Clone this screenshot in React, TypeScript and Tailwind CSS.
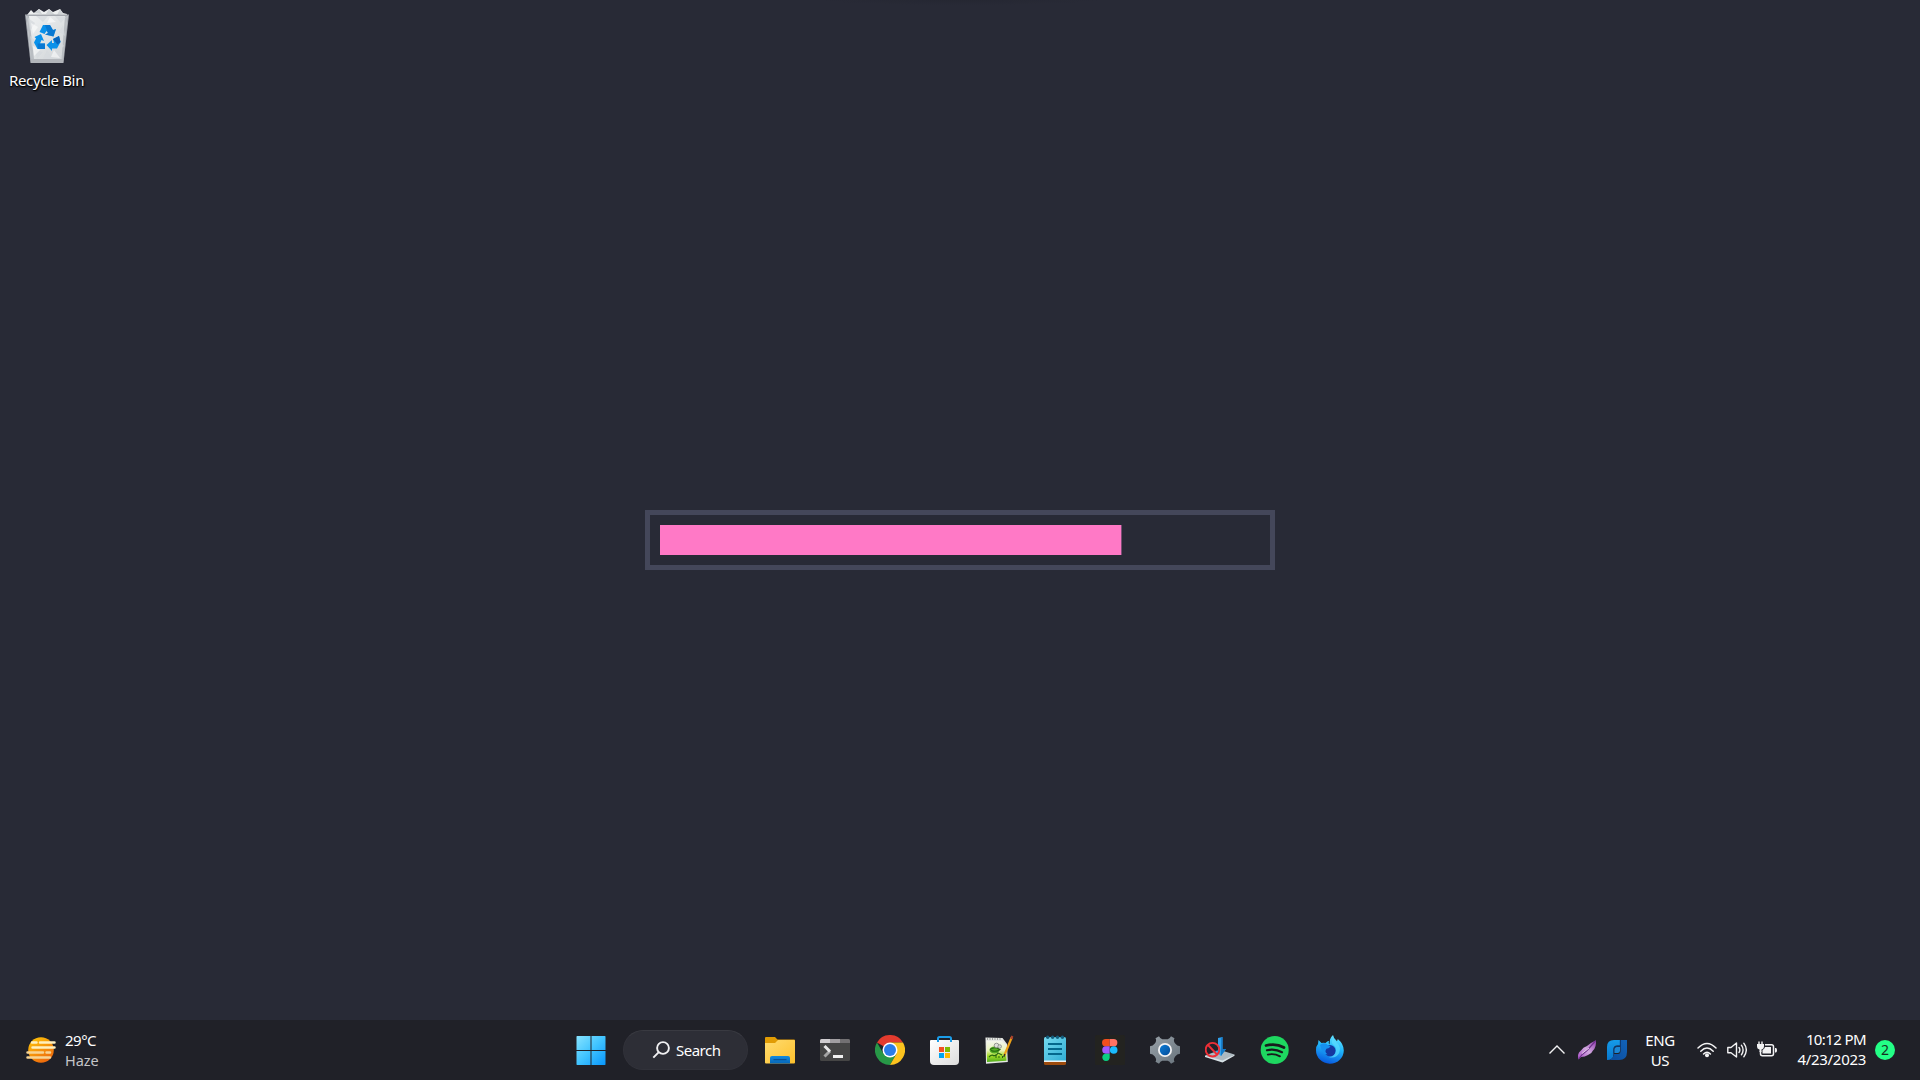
import React from 'react';

type IconProps = { children: React.ReactNode; className?: string; size?: number };

const Icon = ({ children, className = '', size = 30 }: IconProps) => (
  <svg viewBox={`0 0 ${size} ${size}`} width={size} height={size} fill="none" className={`block shrink-0 ${className}`}>
    {children}
  </svg>
);

const Cell = ({ children }: { children: React.ReactNode }) => (
  <button className="flex h-[60px] w-[55px] shrink-0 items-center justify-center">{children}</button>
);

const RecycleBin = () => (
  <svg viewBox="0 0 48 56" width="48" height="56" className="block" fill="none">
    <defs>
      <linearGradient id="bin" x1="0" y1="0" x2="1" y2="1">
        <stop offset="0" stopColor="#eff1f2" />
        <stop offset="1" stopColor="#d0d4d7" />
      </linearGradient>
    </defs>
    <path d="M4 7 8 2 11 5 16 1 21 4 26 1 30 4 37 1 40 5 44 6 43 12H5z" fill="#eceeef" />
    <path d="M11 5 16 1 19 6zM26 1 32 7 23 6zM37 1 40 6 34 7z" fill="#cfd3d6" />
    <path d="M2 6.5h44L40.500 55H7.500z" fill="#a5a9b0" />
    <path d="M3.500 8h41L40 51H8z" fill="url(#bin)" />
    <path d="M3.500 8H6L11 51H8zM44.500 8H42L38.500 51H40z" fill="#b9bdc2" />
    <path d="M5 10 12 15 7 23zM13 8 20 14 25 8zM32 8 38 15 43 9zM40 17 36 24 42 28zM7 28 14 34 9 40zM37 33 41 38 35 43zM12 42 20 44 14 51zM24 42 30 51 20 51zM32 43 39 46 35 51z" fill="#d6dadd" opacity=".75" />
    <path d="M8 15 15 19 10 26zM27 9 33 14 24 15zM10 38 17 42 11 48zM31 42 37 50 28 49z" fill="#fff" opacity=".55" />
    <path d="M7.500 51h33l-.5 4h-32z" fill="#b2b5ba" />
    <path d="M16.500 24 20 17h7l3 5 3-1-2.500 7.500L22 26.500l3-1.500-1.500-2L21.500 26z" fill="#0a91ea" />
    <path d="M22 17h5l3 5 3-1-2.500 7.500L22 26.500l3-1.500z" fill="#0765bd" opacity=".55" />
    <path d="M11.500 29 18 26l3 7-2.500-1-1.500 3.500h5V41h-7.500L11 34.500l2-4z" fill="#0a91ea" />
    <path d="M14.500 35.500H22V41h-7z" fill="#0878d3" />
    <path d="M30 31 36 28 37.500 34 34 40.500H29V43L23.500 37 29 32v3h2z" fill="#0a91ea" />
    <path d="M30 31 36 28 37.500 34 34.500 36.500z" fill="#0765bd" />
  </svg>
);

const Haze = () => (
  <Icon>
    <defs>
      <linearGradient id="sun" x1="0" y1="0" x2=".6" y2="1">
        <stop offset="0" stopColor="#ffca08" />
        <stop offset="1" stopColor="#ee6a0c" />
      </linearGradient>
    </defs>
    <circle cx="15" cy="15" r="12.800" fill="url(#sun)" />
    <g stroke="#fff0bd" strokeWidth="2.500" strokeLinecap="round">
      <path d="M6 7.500h4.500M14 7.500h14.500M6.500 12.500H28.500" />
      <path d="M1.500 17.500H17M20.500 17.500H24M1.500 22.500H24" stroke="#f7d493" />
    </g>
  </Icon>
);

const StartLogo = () => (
  <Icon className="mr-px">
    <defs>
      <linearGradient id="win" x1="0" y1="0" x2="30" y2="30" gradientUnits="userSpaceOnUse">
        <stop stopColor="#8be5ff" />
        <stop offset=".5" stopColor="#41c4ff" />
        <stop offset="1" stopColor="#0795fb" />
      </linearGradient>
    </defs>
    <path d="M1 1h13.500v14H.5V1.500zM15.500 1H29l.5.5V15h-14zM.5 16h14v14H1l-.5-.5zM15.500 16h14v13.500l-.5.5H15.500z" fill="url(#win)" />
  </Icon>
);

const Explorer = () => (
  <Icon>
    <defs>
      <linearGradient id="fold" x1="0" y1="0" x2="1" y2="1">
        <stop stopColor="#ffdc70" />
        <stop offset="1" stopColor="#fdc02c" />
      </linearGradient>
      <linearGradient id="foldb" x1="0" y1="0" x2="0" y2="1">
        <stop stopColor="#118ade" />
        <stop offset="1" stopColor="#0666b8" />
      </linearGradient>
    </defs>
    <path d="M0 3q0-1 1-1h9l2.500 2.500H29q1 0 1 1V12H0z" fill="#e19c04" />
    <path d="M0 8h10l3-3h16q1 0 1 1v21.500q0 1-1 1H1q-1 0-1-1z" fill="url(#fold)" />
    <path d="M5 28.500V23q0-2 2-2h16q2 0 2 2v5.500z" fill="url(#foldb)" />
    <path d="M8.500 24.700h13" stroke="#07488c" />
  </Icon>
);

const Terminal = () => (
  <Icon>
    <rect y="4" width="30" height="22" rx="1.500" fill="#454545" />
    <path d="M0 8V5.500Q0 4 1.500 4H10v4z" fill="#d0cdd0" />
    <path d="M10 4h10v4H10z" fill="#a19ea1" />
    <path d="M20 4h8.500Q30 4 30 5.500V8H20z" fill="#727072" />
    <path d="M4.500 21.500 10 16" stroke="#a5a5a5" strokeWidth="3" />
    <path d="M4.500 11 10 16.500" stroke="#e9e9e9" strokeWidth="3" />
    <path d="M13 20h10v3H13z" fill="#f0f0f0" />
  </Icon>
);

const Chrome = () => (
  <Icon>
    <path d="M15 15 2 7.500A15 15 0 0 1 28 7.500L15 7.500z" fill="#e33b2e" />
    <path d="M2 7.500A15 15 0 0 0 15 30l6.500-11.250L15 15 8.500 18.750z" fill="#279847" />
    <path d="M28 7.500A15 15 0 0 1 15 30l6.500-11.250L15 7.500z" fill="#fcc31e" />
    <circle cx="15" cy="15" r="7.500" fill="#fff" />
    <circle cx="15" cy="15" r="6" fill="#2b7de9" />
  </Icon>
);

const Store = () => (
  <Icon>
    <defs>
      <linearGradient id="bag" x1="0" y1="0" x2="1" y2="1">
        <stop stopColor="#fff" />
        <stop offset="1" stopColor="#dcdcdc" />
      </linearGradient>
    </defs>
    <path d="M0 6q0-1 1-1h27q1 0 1 1v20q0 4-4 4H4q-4 0-4-4z" fill="url(#bag)" />
    <path d="M8 7V3.500Q8 2 9.500 2h10Q21 2 21 3.500V7" stroke="#1b9de8" strokeWidth="2" />
    <path d="M9 12h5v5H9z" fill="#f25022" />
    <path d="M15 12h5v5h-5z" fill="#7fba00" />
    <path d="M9 18h5v5H9z" fill="#00a4ef" />
    <path d="M15 18h5v5h-5z" fill="#ffb900" />
  </Icon>
);

const NotepadPlus = () => (
  <Icon>
    <defs>
      <linearGradient id="npp" x1="0" y1="0" x2="0" y2="1">
        <stop stopColor="#f3f5ec" />
        <stop offset=".45" stopColor="#eaf4bb" />
        <stop offset=".7" stopColor="#a6dc29" />
        <stop offset="1" stopColor="#4fae1c" />
      </linearGradient>
    </defs>
    <path d="M.5 2.500 17.500 3 22 9l.8 18L1 28.700z" fill="#e6e8e4" />
    <path d="M1.500 6 17 6 21 10l.5 15.800L2 27z" fill="url(#npp)" />
    <path d="M2 4h15" stroke="#8b8d8a" strokeWidth="1.500" strokeDasharray="1 1.500" />
    <ellipse cx="9.500" cy="15" rx="5" ry="3.500" fill="#54ae23" />
    <path d="M5 14.500q5-3.500 10 0-4 3-9 1M7 20q4 2 6-2l4 2M4 22q3-3 5-1" stroke="#276811" strokeWidth="1.100" />
    <circle cx="11.500" cy="10.500" r="2.300" fill="#dedfd9" stroke="#80837f" strokeWidth=".8" />
    <circle cx="14.700" cy="11.500" r="1.800" fill="#d2d7cf" stroke="#80837f" strokeWidth=".7" />
    <path d="M11 23v-3.500M14 23v-2M17.500 23v-2" stroke="#26650f" />
    <path d="M26.700 2.500 19.500 20" stroke="#eda218" strokeWidth="2.200" />
    <path d="m27.300 1-1.100 3" stroke="#ab422d" strokeWidth="2.300" />
    <path d="m19.800 19-1 3" stroke="#33322f" strokeWidth="1.300" />
  </Icon>
);

const Notepad = () => (
  <Icon>
    <defs>
      <linearGradient id="note" x1="0" y1="0" x2="1" y2="1">
        <stop stopColor="#75daf0" />
        <stop offset="1" stopColor="#31aed4" />
      </linearGradient>
    </defs>
    <path d="M4 22h22v6.500q0 1.500-1.500 1.500h-19Q4 30 4 28.500z" fill="#9d4b0d" />
    <path d="M4 22h22v5H4z" fill="#edf2f3" />
    <path d="M4 3.500Q4 2 5.500 2h19Q26 2 26 3.500v22H4z" fill="url(#note)" />
    <g fill="#155f7e">
      <circle cx="7.700" cy="2.200" r="1.700" />
      <circle cx="12.600" cy="2.200" r="1.700" />
      <circle cx="17.500" cy="2.200" r="1.700" />
      <circle cx="22.400" cy="2.200" r="1.700" />
    </g>
    <path d="M8 9h14M8 14h14M8 19h14" stroke="#04688c" strokeWidth="1.800" />
  </Icon>
);

const Figma = () => (
  <Icon>
    <rect width="30" height="30" rx="1.500" fill="#23241f" fillOpacity=".9" />
    <path d="M14.700 4h-4a3.670 3.670 0 0 0 0 7.340h4z" fill="#f24e1e" />
    <path d="M14.700 4h4a3.670 3.670 0 0 1 0 7.340h-4z" fill="#ff7262" />
    <path d="M14.700 11.340h-4a3.670 3.670 0 0 0 0 7.330h4z" fill="#a259ff" />
    <circle cx="18.700" cy="15" r="3.800" fill="#1abcfe" />
    <path d="M14.700 18.670h-4a3.670 3.670 0 1 0 4 3.670z" fill="#0acf83" />
  </Icon>
);

const Settings = () => (
  <Icon>
    <defs>
      <linearGradient id="gear" x1="0" y1="0" x2="1" y2="1">
        <stop stopColor="#98a1a8" />
        <stop offset="1" stopColor="#68737c" />
      </linearGradient>
      <linearGradient id="hub" x1="0" y1="0" x2="1" y2="1">
        <stop stopColor="#0b7cd6" />
        <stop offset="1" stopColor="#064d99" />
      </linearGradient>
    </defs>
    <path d="M5.500 3.200 9 1.200q1.200 2.600 3.300 3h5.400q2.100-.4 3.300-3l3.500 2q-1.500 2.500.7 5.300Q27 11 30 11.200v7.600q-3 .2-4.800 2.700-2.200 2.800-.7 5.300l-3.500 2q-1.200-2.600-3.300-3h-5.400q-2.100.4-3.300 3l-3.500-2q1.500-2.500-.7-5.300Q3 19 0 18.800v-7.600q3-.2 4.800-2.700 2.200-2.800.7-5.300z" fill="url(#gear)" />
    <circle cx="15" cy="15" r="7" fill="#f2f2f3" />
    <circle cx="15" cy="15" r="5.200" fill="url(#hub)" />
  </Icon>
);

const Installer = () => (
  <Icon>
    <path d="M0 20.500 15 15l14.500 4.500L17.500 27z" fill="#adb9c0" />
    <path d="M0 20.500 17.500 25.500 29.500 19.500v1.200L17.500 27.500 0 22z" fill="#d8e2e7" />
    <path d="m13 3 4.500-1v12l3.500 0-5 7-6-5 3-.5z" fill="#30a0eb" />
    <path d="m16.200 2.300 1.300-.3v12h3.500l-5 7z" fill="#1379c7" />
    <circle cx="7.500" cy="14.700" r="6.800" stroke="#ed2f36" strokeWidth="1.900" />
    <path d="m3 10 9 9.500" stroke="#ed2f36" strokeWidth="1.900" />
  </Icon>
);

const Spotify = () => (
  <Icon>
    <circle cx="14.700" cy="15" r="14" fill="#1ed760" />
    <g stroke="#181b1c" strokeLinecap="round">
      <path d="M6 10.500q10-2.500 18 2" strokeWidth="2.700" />
      <path d="M7 15.200q8-2 15 2" strokeWidth="2.200" />
      <path d="M7.800 19.600q6.500-1.500 12.200 1.800" strokeWidth="1.800" />
    </g>
  </Icon>
);

const Firefox = () => (
  <Icon>
    <defs>
      <linearGradient id="fx" x1=".7" y1="0" x2=".4" y2="1">
        <stop stopColor="#67e6ff" />
        <stop offset=".45" stopColor="#20b5fa" />
        <stop offset="1" stopColor="#0757de" />
      </linearGradient>
    </defs>
    <path d="M3.500 5 6.500 8q2-.7 4 0 2-2.200 3.500-2-1 2 .5 3.500L15 4.500Q16 1.500 18 0q.3 3 4 6.200l.8-2.200Q28.800 9 28.800 15.500A13.900 13.500 0 1 1 1 15q0-4 2-6z" fill="url(#fx)" />
    <circle cx="15" cy="15.700" r="5.600" fill="#16379f" />
    <path d="M5 10q4-3.500 8.500.5l2 .7q-1 2-4 2.500-2.500 3 1 5.500-4 .5-5.500-3z" fill="#1690f0" />
    <path d="M17.500 9q4.500 3 3.200 8-1.500 5-7 5 7 2 10.500-4 2-6-2-10L18 3q-2 3.500-.5 6z" fill="#5bdcff" opacity=".7" />
  </Icon>
);

const Search = () => (
  <Icon size={18} className="mt-[-1px]">
    <circle cx="11" cy="7" r="5.900" stroke="#f0f0f2" strokeWidth="1.900" />
    <path d="M6.800 11.200 1.300 16.700" stroke="#f0f0f2" strokeWidth="1.900" />
  </Icon>
);

const TrayCell = ({ children }: { children: React.ReactNode }) => (
  <div className="flex w-[30px] shrink-0 justify-center">{children}</div>
);

const Feather = () => (
  <Icon size={20}>
    <defs>
      <linearGradient id="fea" x1="0" y1="1" x2="1" y2="0">
        <stop stopColor="#a74cc5" />
        <stop offset=".5" stopColor="#d1a8df" />
        <stop offset="1" stopColor="#8e3aad" />
      </linearGradient>
    </defs>
    <path d="M1.200 19.500 1 15q.5-3 3-4.500Q6 7 10 6q4-3.500 9-5.800Q19.500 7 16 10.500q-1.500 3.500-5 4.500-3 2-7 2z" fill="url(#fea)" />
    <path d="M1.500 19Q5 14 10 10.500L18.500 1" stroke="#6f318d" strokeWidth="1.200" />
    <path d="M5 13.500 12 8" stroke="#e5cbec" />
  </Icon>
);

const PdfTool = () => (
  <Icon size={20}>
    <defs>
      <linearGradient id="pdfl" x1="0" y1="0" x2="0" y2="1">
        <stop stopColor="#159be9" />
        <stop offset="1" stopColor="#0878cf" />
      </linearGradient>
      <linearGradient id="pdfr" x1="1" y1="0" x2="0" y2="1">
        <stop stopColor="#1263b9" />
        <stop offset="1" stopColor="#0b4c9c" />
      </linearGradient>
    </defs>
    <path d="M0 7q0-7 7-7h6v5.500h-3Q6.500 5.500 6.500 9v5Q6.500 20 0 20z" fill="url(#pdfl)" />
    <path d="M14 0h6v12q0 8-8 8H2.500q4-1.500 4.300-6H11q2.500 0 2.500-3V1z" fill="url(#pdfr)" />
    <path d="M7.300 13V9.700Q7.300 7 10 7h3v3.700Q13 13 10.700 13z" fill="#1b86d4" />
    <path d="M13.300 0v6.300H10q-3.300 0-3.300 3.400v4" stroke="#0b3b79" strokeWidth=".9" />
  </Icon>
);

const Wifi = () => (
  <Icon size={20}>
    <g stroke="#f2f2f3" strokeWidth="1.500" strokeLinecap="round">
      <path d="M1 8q9-9 18 0M3.800 11.200q6.200-6.400 12.400 0M6.600 14q3.400-3.600 6.800 0" />
    </g>
    <circle cx="10" cy="15.200" r="2" fill="#f2f2f3" />
  </Icon>
);

const Speaker = () => (
  <Icon size={20}>
    <g stroke="#f2f2f3" strokeWidth="1.400" strokeLinecap="round" strokeLinejoin="round">
      <path d="M.8 7.500H4L9.500 3v14L4 12.700H.8z" />
      <path d="M12 7.500q1.800 2.500 0 5M14.400 5.200q3.400 4.800 0 9.600M16.800 3.200q5 6.800 0 13.600" />
    </g>
  </Icon>
);

const Battery = () => (
  <Icon size={20}>
    <path d="M8 4.700h6.500q2 0 2 2v7q0 2-2 2h-9q-2 0-2-2V11" stroke="#f2f2f3" strokeWidth="1.500" />
    <path d="M8 7h6v6.500H5.500V10q2-1 2.500-3z" fill="#f2f2f3" />
    <path d="M18 8h1q1 .3 1 2.200T19 12.500h-1z" fill="#f2f2f3" />
    <path d="M0 4h7v2q0 3-2.500 3.500V12h-2V9.500Q0 9 0 6zM1.300 1.500h1.400V4H1.300zM4.300 1.500h1.400V4H4.300z" fill="#f2f2f3" />
  </Icon>
);

export default function App() {
  return (
    <main className="flex h-screen w-full flex-col overflow-hidden bg-[#282a36] font-['Noto_Sans','Open_Sans',sans-serif] text-white">
      <section className="grid min-h-0 flex-1 grid-cols-[93px_1fr_93px] bg-[radial-gradient(ellipse_140px_5px_at_50%_0,#252732,#282a36)]">
        <div className="flex flex-col items-center pt-[8px]">
          <RecycleBin />
          <span className="mt-[6px] whitespace-nowrap text-[15px] leading-[20px] tracking-[-0.35px] [text-shadow:1px_1px_2px_#000,0_1px_1px_#000]">
            Recycle Bin
          </span>
        </div>
        <div className="flex items-start justify-center pt-[510px]">
          <div className="h-[60px] w-[630px] border-[5px] border-[#44475a] p-[10px]">
            <div className="h-[30px] w-[461px] bg-[#ff79c6] shadow-[1px_0_0_#784e73]" />
          </div>
        </div>
      </section>

      <footer className="flex h-[60px] shrink-0 items-center bg-[#202128] text-[14.500px] leading-[20px]">
        <div className="flex w-[564px] shrink-0 items-center pl-[26px]">
          <Haze />
          <div className="ml-[9px]">
            <div className="text-[15px] tracking-[-0.5px]">29°C</div>
            <div className="tracking-[-0.1px] text-[#c5c5c8]">Haze</div>
          </div>
        </div>
        <Cell><StartLogo /></Cell>
        <button className="ml-[4px] flex h-[40px] w-[125px] shrink-0 items-center rounded-full border border-[#31323a] border-t-[#393a41] bg-[#2d2e36] pl-[28px]">
          <Search />
          <span className="ml-[6px] text-[15px] tracking-[-0.5px]">Search</span>
        </button>
        <div className="ml-[4.500px] flex">
          <Cell><Explorer /></Cell>
          <Cell><Terminal /></Cell>
          <Cell><Chrome /></Cell>
          <Cell><Store /></Cell>
          <Cell><NotepadPlus /></Cell>
          <Cell><Notepad /></Cell>
          <Cell><Figma /></Cell>
          <Cell><Settings /></Cell>
          <Cell><Installer /></Cell>
          <Cell><Spotify /></Cell>
          <Cell><Firefox /></Cell>
        </div>
        <div className="ml-auto flex items-center pr-[25px]">
          <TrayCell>
            <Icon size={20}><path d="m2.500 13.500 7.500-7.500 7.500 7.500" stroke="#f2f2f3" strokeWidth="1.400" /></Icon>
          </TrayCell>
          <TrayCell><Feather /></TrayCell>
          <TrayCell><PdfTool /></TrayCell>
          <div className="mr-[4px] w-[56px] text-center text-[15px] tracking-[-0.4px]">
            <div>ENG</div>
            <div>US</div>
          </div>
          <TrayCell><Wifi /></TrayCell>
          <TrayCell><Speaker /></TrayCell>
          <TrayCell><Battery /></TrayCell>
          <div className="mb-[2px] w-[84px] whitespace-nowrap text-right text-[15px]">
            <div className="tracking-[-0.6px]">10:12 PM</div>
            <div className="tracking-[-0.3px]">4/23/2023</div>
          </div>
          <div className="ml-[9px] flex size-[20px] items-center justify-center rounded-full bg-[#23ff86] text-[14px] text-[#17301f]">2</div>
        </div>
      </footer>
    </main>
  );
}
